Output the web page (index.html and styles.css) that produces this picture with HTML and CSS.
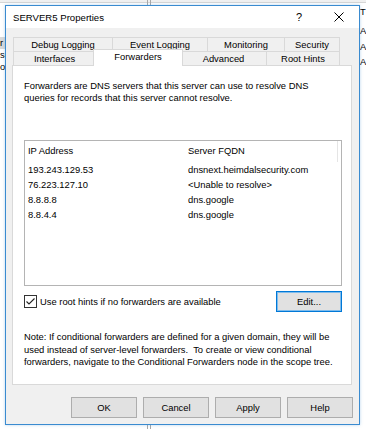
FILE: index.html
```html
<!DOCTYPE html>
<html>
<head>
<meta charset="utf-8">
<link rel="stylesheet" href="styles.css">
</head>
<body>
<div class="desk-top"></div>
<div class="vline"></div>
<div class="left-frag">
  <div class="sel">r</div>
  <div>se</div>
  <div>o</div>
</div>
<div class="right-frag">
  <div class="hdr">T</div>
  <div>A</div>
  <div>A</div>
  <div>A</div>
</div>

<div class="dialog">
  <div class="titlebar">
    <span class="title">SERVER5 Properties</span>
    <span class="cap-btn help-q">?</span>
    <span class="cap-btn close">
      <svg width="10" height="10" viewBox="0 0 10 10"><path d="M0.5 0.5 L9.5 9.5 M9.5 0.5 L0.5 9.5" stroke="#000" stroke-width="1" fill="none"/></svg>
    </span>
  </div>
  <div class="body">
    <div class="tabs">
      <div class="tabrow row-back">
        <div class="tab">Debug Logging</div>
        <div class="tab">Event Logging</div>
        <div class="tab">Monitoring</div>
        <div class="tab last">Security</div>
      </div>
      <div class="tabrow row-front">
        <div class="tab">Interfaces</div>
        <div class="tab sel">Forwarders</div>
        <div class="tab">Advanced</div>
        <div class="tab last">Root Hints</div>
      </div>
    </div>
    <div class="panel">
      <p class="intro">Forwarders are DNS servers that this server can use to resolve DNS<br>queries for records that this server cannot resolve.</p>
      <div class="list">
        <div class="lrow lhead">
          <div class="c1">IP Address</div>
          <div class="c2">Server FQDN</div>
        </div>
        <div class="lrow"><div class="c1">193.243.129.53</div><div class="c2">dnsnext.heimdalsecurity.com</div></div>
        <div class="lrow"><div class="c1">76.223.127.10</div><div class="c2">&lt;Unable to resolve&gt;</div></div>
        <div class="lrow"><div class="c1">8.8.8.8</div><div class="c2">dns.google</div></div>
        <div class="lrow"><div class="c1">8.8.4.4</div><div class="c2">dns.google</div></div>
      </div>
      <div class="rootrow">
        <label class="chk">
          <span class="box"><svg width="11" height="11" viewBox="0 0 11 11"><path d="M1.5 5.5 L4 8 L9.5 2.5" stroke="#222" stroke-width="1.1" fill="none"/></svg></span>
          <span>Use root hints if no forwarders are available</span>
        </label>
        <button class="btn default">Edit...</button>
      </div>
      <p class="note">Note: If conditional forwarders are defined for a given domain, they will be<br>used instead of server-level forwarders.&nbsp; To create or view conditional<br>forwarders, navigate to the Conditional Forwarders node in the scope tree.</p>
    </div>
    <div class="buttons">
      <button class="btn">OK</button>
      <button class="btn">Cancel</button>
      <button class="btn">Apply</button>
      <button class="btn">Help</button>
    </div>
  </div>
</div>
</body>
</html>
```

FILE: styles.css
```css
* { box-sizing: border-box; }
html, body { margin: 0; padding: 0; }
body {
  width: 366px;
  height: 429px;
  overflow: hidden;
  position: relative;
  background: #fff;
  font-family: "Liberation Sans", Arial, sans-serif;
  font-size: 9.4px;
  color: #000;
}
.desk-top {
  height: 3px;
  background: #f0f0f0;
  border-bottom: 1px solid #d6d6d6;
}
.vline {
  position: absolute;
  top: 0;
  bottom: 0;
  left: 147px;
  width: 4px;
  border-left: 1px solid #a8a8a8;
  border-right: 1px solid #a8a8a8;
}
.left-frag {
  position: absolute;
  left: 0;
  top: 37px;
  width: 5px;
}
.left-frag div { height: 12px; line-height: 12px; white-space: nowrap; }
.left-frag .sel { background: #d9d9d9; }
.right-frag {
  position: absolute;
  right: 0;
  top: 6px;
  width: 6px;
}
.right-frag div { height: 15.5px; line-height: 15.5px; white-space: nowrap; }
.right-frag .hdr { height: 17px; line-height: 12px; }

.dialog {
  position: absolute;
  left: 5px;
  top: 5px;
  width: 355px;
  height: 420px;
  border: 1px solid #3a8bd0;
  background: #f0f0f0;
  display: flex;
  flex-direction: column;
  box-shadow: 0 0 3px rgba(60, 140, 210, 0.35);
}
.titlebar {
  height: 22px;
  background: #fff;
  display: flex;
  align-items: center;
  padding-left: 7px;
}
.title { flex: 1; font-size: 9.6px; }
.cap-btn {
  width: 40px;
  height: 22px;
  display: flex;
  align-items: center;
  justify-content: center;
}
.help-q { font-size: 11px; }

.body {
  flex: 1;
  display: flex;
  flex-direction: column;
  padding: 9px 7px 6px 6px;
  border-top: 0;
}
.tabs {
  height: 28px;
  margin-left: 1px;
  display: flex;
  flex-direction: column;
}
.tabrow {
  display: grid;
  height: 14px;
  width: 327px;
}
.row-back { grid-template-columns: 99px 95px 77px 56px; }
.row-front { grid-template-columns: 82px 86px 85px 74px; }
.tab {
  border-top: 1px solid #d9d9d9;
  border-left: 1px solid #d9d9d9;
  background: #f0f0f0;
  text-align: center;
  line-height: 13px;
  white-space: nowrap;
}
.tab.last { border-right: 1px solid #d9d9d9; }
.tab.sel {
  position: relative;
  z-index: 2;
  margin: -2px -2px -1px -2px;
  background: #fff;
  border-right: 1px solid #d9d9d9;
  line-height: 14px;
}
.row-front .tab.sel + .tab { border-left: none; }

.panel {
  height: 320px;
  background: #fff;
  border: 1px solid #d9d9d9;
  padding: 14px 9px 0 11px;
}
.intro {
  margin: 0;
  line-height: 12px;
}
.list {
  margin-top: 36px;
  height: 146px;
  border: 1px solid #b4b4b4;
}
.lrow {
  display: flex;
  height: 15px;
  line-height: 15px;
  white-space: nowrap;
}
.lrow .c1 { width: 160px; padding-left: 3px; }
.lrow .c2 { width: 153px; padding-left: 3px; }
.lhead {
  height: 21px;
  line-height: 20px;
}
.lhead .c2 { border-right: 1px solid #e5e5e5; }

.rootrow {
  margin-top: 5px;
  height: 21px;
  display: flex;
  align-items: center;
  justify-content: space-between;
}
.chk {
  display: flex;
  align-items: center;
  gap: 3px;
}
.box {
  width: 13px;
  height: 13px;
  border: 1px solid #333;
  background: #fff;
  display: flex;
  align-items: center;
  justify-content: center;
}
.btn {
  font-family: inherit;
  font-size: 9.4px;
  color: #000;
  width: 66px;
  height: 21px;
  padding: 0;
  background: #e1e1e1;
  border: 1px solid #adadad;
  border-radius: 0;
}
.btn.default {
  border: 1px solid #0078d7;
  box-shadow: inset 0 0 0 1px #7fbcec;
}
.note {
  margin: 19px 0 0 0;
  line-height: 12.5px;
}
.buttons {
  margin-top: 12px;
  margin-right: -1px;
  display: flex;
  justify-content: flex-end;
  gap: 6px;
}
```
